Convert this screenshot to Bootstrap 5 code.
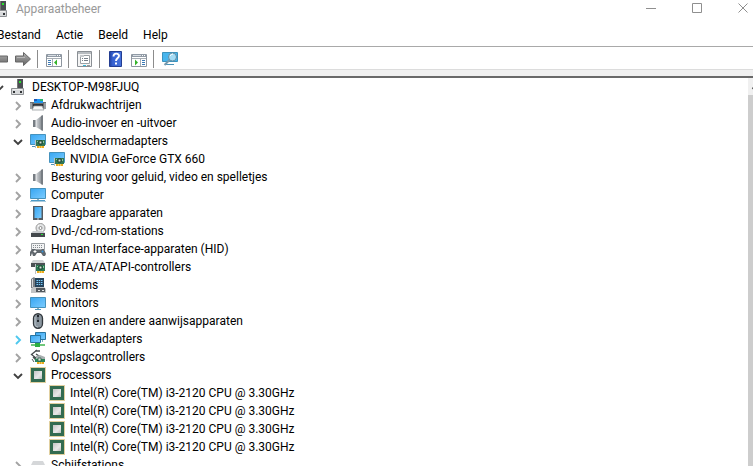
<!DOCTYPE html>
<html lang="nl">
<head>
<meta charset="utf-8">
<meta name="viewport" content="width=device-width, initial-scale=1">
<title>Apparaatbeheer</title>
<link href="https://cdn.jsdelivr.net/npm/bootstrap@5.3.0/dist/css/bootstrap.min.css" rel="stylesheet">
<style>
body{font-family:Roboto,"Noto Sans",sans-serif;font-size:12px;line-height:18px;color:#000;background:#fff}
.win{margin-left:-8px;margin-right:-13px}
.win button{border:0;background:none;padding:0;color:inherit;line-height:18px}
.win svg{display:block;flex:none}
.ic{width:16px;height:16px}
.titlebar{color:#999;height:18px}
.caption{gap:6px;padding-left:2px}
.winbtn{width:46px;height:16px;display:flex;align-items:center;justify-content:center}
.menubar{padding:8px 0 2px 5px;gap:15px}
.tools{border-top:1px solid #a9a9a9;height:24px;padding-top:2px;border-bottom:1px solid #dcdcdc}
.tools button+button{margin-left:7px}
.sep{width:1px;height:18px;background:#8c8c8c;margin:0 8px 0 6px}
.strip{height:8px;background:#f0f0f0;border-bottom:2px solid #696969}
.tree ul{padding-left:19px}
.item{height:18px;white-space:nowrap}
.win .tw{width:14px;height:18px;padding-top:2px;margin-right:5px;color:#a3a3a3;display:flex;align-items:center;justify-content:center}
.win .tw.open{color:#404040}
.win .tw.hot{color:#4fc8ee}
.leaf{padding-left:19px}
.item .ic{margin-right:5px}
.scroll{width:18px;background:#f0f0f0}
.thumb{background:#cdcdcd}
</style>
<script src="https://cdn.jsdelivr.net/npm/bootstrap@5.3.0/dist/js/bootstrap.bundle.min.js"></script>
</head>
<body class="overflow-hidden">
<svg class="position-absolute" width="0" height="0" aria-hidden="true" xmlns="http://www.w3.org/2000/svg">
<defs>
<linearGradient id="blue" x1="0" y1="0" x2="1" y2="1"><stop offset="0" stop-color="#37a6f2"/><stop offset="1" stop-color="#7cccff"/></linearGradient>
<linearGradient id="grey" x1="0" y1="0" x2="0" y2="1"><stop offset="0" stop-color="#b4b4b4"/><stop offset=".5" stop-color="#8a8a8a"/><stop offset="1" stop-color="#666"/></linearGradient>
<linearGradient id="cone" x1="0" y1="0" x2="1" y2="0"><stop offset="0" stop-color="#d5d8db"/><stop offset="1" stop-color="#82888e"/></linearGradient>
<linearGradient id="silver" x1="0" y1="0" x2="1" y2="1"><stop offset="0" stop-color="#c4c4c4"/><stop offset=".6" stop-color="#e8e8e8"/><stop offset="1" stop-color="#bdbdbd"/></linearGradient>
<linearGradient id="book" x1="0" y1="0" x2="1" y2="0"><stop offset="0" stop-color="#203f9e"/><stop offset=".25" stop-color="#3560cf"/><stop offset="1" stop-color="#4773dc"/></linearGradient>
</defs>
<symbol id="right" viewBox="0 0 8 10"><path d="M2 1l4 4-4 4" fill="none" stroke="currentColor" stroke-width="1.9"/></symbol>
<symbol id="down" viewBox="0 0 10 8"><path d="M1 2l4 4 4-4" fill="none" stroke="currentColor" stroke-width="1.9"/></symbol>
<symbol id="tower" viewBox="0 0 16 16"><path d="M6 0h6v10H6z" fill="#4b4f52"/><path d="M6 0h1v10H6z" fill="#777"/><path d="M8 2h2v2H8z" fill="#27e32c"/><path d="M.5 9.500h12v6H.5z" fill="#d8dadc" stroke="#8d9093"/><path d="M2 10h9v1H2z" fill="#eee"/><path d="M2 12h2v2H2zM9 12h2v2H9z" fill="#303336"/></symbol>
<symbol id="printer" viewBox="0 0 16 16"><path d="M4 2h9v5H4z" fill="#2196ef"/><path d="M4 2h3v2H4z" fill="#2056b8"/><path d="M10 2h3v2h-3z" fill="#29b46a"/><path d="M0 5h4v1h9V5h3v7H0z" fill="#6b7075"/><path d="M0 6h2v6H0zM14 6h2v6h-2z" fill="#9ba0a4"/><path d="M3 7h10v2H3z" fill="#303439"/><path d="M4 9h8l2 4H2z" fill="#f7f7f7" stroke="#8b9094" stroke-width=".7"/></symbol>
<symbol id="speaker" viewBox="0 0 16 16"><path d="M3 5h3v7H3z" fill="#777d83"/><path d="M6 5l6-4.500v15L6 12z" fill="url(#cone)"/><path d="M11 1l2-1v16l-2-1z" fill="#777d83"/><path d="M6 5v7" stroke="#eceeef"/></symbol>
<symbol id="display" viewBox="0 0 16 16"><path d="M.5 1.500h15v10H.5z" fill="url(#blue)" stroke="#4592bd"/><path d="M2 13h3v1H2z" fill="#5191b5"/><path d="M5.500 7v8" stroke="#bbc1c4"/><path d="M6 7h9v6H6z" fill="#327654"/><path d="M9 8h3v3H9z" fill="#d2ded4" stroke="#173f2d"/><path d="M7 8h1v1H7zM13 8h1v2h-1z" fill="#8bc59b"/><path d="M7 13h7v2H7z" fill="#eca91c"/><path d="M9.500 13v2M11.500 13v2" stroke="#fff1a3" stroke-width=".5"/></symbol>
<symbol id="computer" viewBox="0 0 16 16"><path d="M.5 1.500h15v10H.5z" fill="url(#blue)" stroke="#4592bd"/><path d="M7 12h2v1H7z" fill="#91aeba"/><path d="M1 13h14v1H1z" fill="#4c9bc8"/><path d="M0 14h16v1H0z" fill="#a8c9dc"/></symbol>
<symbol id="monitor" viewBox="0 0 16 16"><path d="M.5 2.500h15v10H.5z" fill="url(#blue)" stroke="#4592bd"/><path d="M7 13h2v1H7z" fill="#91aeba"/><path d="M5 14h6v1H5z" fill="#4f9ac0"/></symbol>
<symbol id="tablet" viewBox="0 0 16 16"><path d="M3 1h10v14H3z" fill="#535b62"/><path d="M4.500 2h7v11h-7z" fill="url(#blue)"/><path d="M7 13.500h2v1H7z" fill="#c9d4da"/></symbol>
<symbol id="disc" viewBox="0 0 16 16"><circle cx="10.500" cy="5" r="4.500" fill="#e2e4e5" stroke="#999"/><path d="M8 2l5 6" stroke="#fff"/><circle cx="10.500" cy="5" r="1.500" fill="#fff" stroke="#888"/><path d="M3 8h10l2 2H1z" fill="#c9cccf"/><path d="M1 10h14v4H1z" fill="#44494d"/><path d="M11 11h2v1h-2z" fill="#28df34"/></symbol>
<symbol id="hid" viewBox="0 0 16 16"><path d="M1.500 2.500h13v6h-13z" fill="#f2f3f4" stroke="#9ca1a5"/><path d="M3 4.500h10M3 6.500h10" stroke="#858b90" stroke-dasharray="1 1"/><path d="M2 8h3l1 1h5l1-1h2l2 5-1 2h-2l-2-3H7l-2 3H3L2 12l-1 3H0v-4z" fill="#60676d"/><path d="M5 9v3M3.500 10.500h3" stroke="#fff"/><circle cx="12.500" cy="10.500" r="1" fill="#3295db"/></symbol>
<symbol id="ide" viewBox="0 0 16 16"><path d="M3 1h10l2 3H1z" fill="#d0d3d5"/><path d="M1 4h14v4H1z" fill="#4c5155"/><path d="M5.500 5v10" stroke="#bbc1c4"/><path d="M6 6h9v6H6z" fill="#2c7753"/><path d="M9 7h3v3H9z" fill="#dce5dd" stroke="#173f2d"/><path d="M7 7h1v1H7zM13 7h1v2h-1z" fill="#8bc59b"/><path d="M7 12h7v2H7z" fill="#eca91c"/><path d="M9.500 12v2M11.500 12v2" stroke="#fff1a3" stroke-width=".5"/></symbol>
<symbol id="modem" viewBox="0 0 16 16"><path d="M1 2l3-2 2 2v9H1z" fill="#797f84"/><path d="M2 2h1v8H2z" fill="#d6d8da"/><path d="M5 1h9v9H5z" fill="#24425a"/><path d="M6.500 3.500h6M6.500 5.500h6M6.500 7.500h6" stroke="#78c9fa" stroke-dasharray="1.500 .75"/><path d="M3 10h11l2 2v4H1v-4z" fill="#c1c4c6"/><path d="M6 11h9v4H6z" fill="#52595e"/><path d="M8 13h2v1H8zM12 13h2v1h-2z" fill="#e3e5e6"/></symbol>
<symbol id="mouse" viewBox="0 0 16 16"><rect x="3.500" y=".75" width="9" height="14.500" rx="4.500" fill="#8b969f" stroke="#31373c" stroke-width="1.300"/><path d="M5 4v7c0 2 2 3 3 3" fill="none" stroke="#b9c4cc"/><path d="M7 2h2v7H7z" fill="#22282e"/><path d="M7.500 4h1v3h-1z" fill="#b9c9d7"/></symbol>
<symbol id="net" viewBox="0 0 16 16"><path d="M5.500 1.500h10v7h-10z" fill="url(#blue)" stroke="#2876a3"/><path d="M.5 4.500h10v7H.5z" fill="url(#blue)" stroke="#2876a3"/><path d="M1 13h14v2H1z" fill="#70c77b"/><path d="M5 12h5v4H5z" fill="#2dae42"/><path d="M12 9h1v2h-1z" fill="#7eaabf"/></symbol>
<symbol id="storage" viewBox="0 0 16 16"><path d="M7 1L1.500 5.500 6 9l3-2-3-2M5 2h5M3 8l3 3" fill="none" stroke="#484c4f" stroke-width="1.300"/><path d="M5 9h10v4H5z" fill="#2c8457"/><path d="M6 7l4-1 5 2v2H6z" fill="#a8afb0"/><path d="M8 9h3v3H8z" fill="#d8e1da" stroke="#225640" stroke-width=".7"/><path d="M7 13h7v2H7z" fill="#eca91c"/><path d="M9.500 13v2M11.500 13v2" stroke="#fff1a3" stroke-width=".5"/><path d="M2 10l2 3" stroke="#55595c"/></symbol>
<symbol id="cpu" viewBox="0 0 16 16"><path d="M.5 .5h15v15H.5z" fill="none" stroke="#c2a040" stroke-dasharray="1 1"/><path d="M1 1h14v14H1z" fill="#326b50"/><path d="M4 4h8v8H4z" fill="url(#silver)"/></symbol>
<symbol id="drive" viewBox="0 0 16 16"><path d="M3 4h10l2 4H1z" fill="#d5d7d9"/><path d="M1 9h14v4H1z" fill="#484d51"/><path d="M12 10h1v1h-1z" fill="#28df34"/></symbol>
<symbol id="back" viewBox="0 0 16 16"><path d="M.5 8l7-6.500V5h8v6h-8v3.500z" fill="url(#grey)" stroke="#666"/></symbol>
<symbol id="forward" viewBox="0 0 16 16"><path d="M15.500 8l-7-6.500V5h-8v6h8v3.500z" fill="url(#grey)" stroke="#666"/><path d="M2 6.500h8" stroke="#b7b7b7"/></symbol>
<symbol id="pane" viewBox="0 0 16 16"><path d="M.5 3.500h15v12H.5z" fill="#fff" stroke="#8e969f"/><path d="M1 3h14v3H1z" fill="#919ba6"/><path d="M2 4h8v1H2z" fill="#d8dde3"/><path d="M11 4h1v1h-1zM13 4h1v1h-1z" fill="#fff"/><path d="M1 7.500h14M6.500 8v7" stroke="#a6adb4"/><path d="M2 9.500h3M2 11.500h3M2 13.500h3" stroke="#3978b5"/><path d="M11 8.500v6l-3-3z" fill="#34b228"/></symbol>
<symbol id="props" viewBox="0 0 16 16"><path d="M.5 .5h14v15H.5z" fill="#f5f5f5" stroke="#8a8f94"/><path d="M1 1h13v2H1z" fill="#b7bcc0"/><path d="M3.500 4.500h9v8h-9z" fill="#fff" stroke="#9ca1a5"/><path d="M3 4h4v2H3z" fill="#c5c9cc"/><path d="M5 7.500h1M7 7.500h4M5 9.500h1M7 9.500h4" stroke="#747f88"/><path d="M6 14h3v1H6z" fill="#36b5d6"/><path d="M10 14h3v1h-3z" fill="#999"/></symbol>
<symbol id="help" viewBox="0 0 16 16"><path d="M1.500 .5h12v15h-12z" fill="url(#book)" stroke="#233d91"/><path d="M5.500 5.500c0-4 5.500-3.500 5.500-.7C11 7 8 7 8 10" fill="none" stroke="#fff" stroke-width="1.900"/><path d="M7 11.500h2v2H7z" fill="#fff"/></symbol>
<symbol id="action" viewBox="0 0 16 16"><path d="M.5 3.500h15v12H.5z" fill="#fff" stroke="#8e969f"/><path d="M1 3h14v3H1z" fill="#919ba6"/><path d="M2 4h8v1H2z" fill="#d8dde3"/><path d="M11 4h1v1h-1zM13 4h1v1h-1z" fill="#fff"/><path d="M1 7.500h14M9.500 8v7" stroke="#a6adb4"/><path d="M11 9.500h3M11 11.500h3M11 13.500h3" stroke="#3978b5"/><path d="M4 8.500v6l3-3z" fill="#34b228"/></symbol>
<symbol id="scan" viewBox="0 0 16 16"><path d="M.5 1.500h15v9H.5z" fill="#47b5ed" stroke="#3b92bd"/><path d="M3 13h9v1H3z" fill="#4992b9"/><path d="M7.500 9l-5 5" stroke="#7899ac" stroke-width="2"/><circle cx="10.500" cy="6" r="4" fill="#a5dcf5" stroke="#638da3"/><path d="M8 5q1-2 3-2" fill="none" stroke="#fff"/></symbol>
</svg>

<main class="win d-flex flex-column vh-100">
  <header class="titlebar d-flex justify-content-between flex-shrink-0">
    <div class="caption d-flex align-items-center"><svg class="ic"><use href="#tower"/></svg><span>Apparaatbeheer</span></div>
    <div class="d-flex">
      <button class="winbtn" aria-label="Minimaliseren"><svg width="11" height="11"><path d="M0 5.500h10" stroke="#8f8f8f"/></svg></button>
      <button class="winbtn" aria-label="Maximaliseren"><svg width="11" height="11"><path d="M.5 .5h9v9h-9z" fill="none" stroke="#8f8f8f"/></svg></button>
      <button class="winbtn" aria-label="Sluiten"><svg width="11" height="11"><path d="M.5 .5l9 9M9.500 .5l-9 9" stroke="#8f8f8f"/></svg></button>
    </div>
  </header>
  <nav class="menubar d-flex flex-shrink-0" aria-label="Menu">
    <button>Bestand</button><button>Actie</button><button>Beeld</button><button>Help</button>
  </nav>
  <div class="tools d-flex align-items-center flex-shrink-0" role="toolbar" aria-label="Werkbalk">
    <button aria-label="Vorige"><svg class="ic"><use href="#back"/></svg></button>
    <button aria-label="Volgende"><svg class="ic"><use href="#forward"/></svg></button>
    <span class="sep"></span>
    <button aria-label="Consolestructuur"><svg class="ic"><use href="#pane"/></svg></button>
    <span class="sep"></span>
    <button aria-label="Eigenschappen"><svg class="ic"><use href="#props"/></svg></button>
    <span class="sep"></span>
    <button aria-label="Help-onderwerpen"><svg class="ic"><use href="#help"/></svg></button>
    <button aria-label="Actievenster"><svg class="ic"><use href="#action"/></svg></button>
    <span class="sep"></span>
    <button aria-label="Zoeken naar gewijzigde apparaten"><svg class="ic"><use href="#scan"/></svg></button>
  </div>
  <div class="strip flex-shrink-0"></div>
  <div class="d-flex flex-grow-1 overflow-hidden">
    <div class="tree flex-grow-1">
      <div class="item d-flex align-items-center"><button class="tw open" aria-label="Samenvouwen"><svg width="10" height="8"><use href="#down"/></svg></button><svg class="ic"><use href="#tower"/></svg><span>DESKTOP-M98FJUQ</span></div>
      <ul class="list-unstyled mb-0">
        <li class="item d-flex align-items-center"><button class="tw" aria-label="Uitvouwen"><svg width="8" height="10"><use href="#right"/></svg></button><svg class="ic"><use href="#printer"/></svg><span>Afdrukwachtrijen</span></li>
        <li class="item d-flex align-items-center"><button class="tw" aria-label="Uitvouwen"><svg width="8" height="10"><use href="#right"/></svg></button><svg class="ic"><use href="#speaker"/></svg><span>Audio-invoer en -uitvoer</span></li>
        <li>
          <div class="item d-flex align-items-center"><button class="tw open" aria-label="Samenvouwen"><svg width="10" height="8"><use href="#down"/></svg></button><svg class="ic"><use href="#display"/></svg><span>Beeldschermadapters</span></div>
          <ul class="list-unstyled mb-0">
            <li class="item leaf d-flex align-items-center"><svg class="ic"><use href="#display"/></svg><span>NVIDIA GeForce GTX 660</span></li>
          </ul>
        </li>
        <li class="item d-flex align-items-center"><button class="tw" aria-label="Uitvouwen"><svg width="8" height="10"><use href="#right"/></svg></button><svg class="ic"><use href="#speaker"/></svg><span>Besturing voor geluid, video en spelletjes</span></li>
        <li class="item d-flex align-items-center"><button class="tw" aria-label="Uitvouwen"><svg width="8" height="10"><use href="#right"/></svg></button><svg class="ic"><use href="#computer"/></svg><span>Computer</span></li>
        <li class="item d-flex align-items-center"><button class="tw" aria-label="Uitvouwen"><svg width="8" height="10"><use href="#right"/></svg></button><svg class="ic"><use href="#tablet"/></svg><span>Draagbare apparaten</span></li>
        <li class="item d-flex align-items-center"><button class="tw" aria-label="Uitvouwen"><svg width="8" height="10"><use href="#right"/></svg></button><svg class="ic"><use href="#disc"/></svg><span>Dvd-/cd-rom-stations</span></li>
        <li class="item d-flex align-items-center"><button class="tw" aria-label="Uitvouwen"><svg width="8" height="10"><use href="#right"/></svg></button><svg class="ic"><use href="#hid"/></svg><span>Human Interface-apparaten (HID)</span></li>
        <li class="item d-flex align-items-center"><button class="tw" aria-label="Uitvouwen"><svg width="8" height="10"><use href="#right"/></svg></button><svg class="ic"><use href="#ide"/></svg><span>IDE ATA/ATAPI-controllers</span></li>
        <li class="item d-flex align-items-center"><button class="tw" aria-label="Uitvouwen"><svg width="8" height="10"><use href="#right"/></svg></button><svg class="ic"><use href="#modem"/></svg><span>Modems</span></li>
        <li class="item d-flex align-items-center"><button class="tw" aria-label="Uitvouwen"><svg width="8" height="10"><use href="#right"/></svg></button><svg class="ic"><use href="#monitor"/></svg><span>Monitors</span></li>
        <li class="item d-flex align-items-center"><button class="tw" aria-label="Uitvouwen"><svg width="8" height="10"><use href="#right"/></svg></button><svg class="ic"><use href="#mouse"/></svg><span>Muizen en andere aanwijsapparaten</span></li>
        <li class="item d-flex align-items-center"><button class="tw hot" aria-label="Uitvouwen"><svg width="8" height="10"><use href="#right"/></svg></button><svg class="ic"><use href="#net"/></svg><span>Netwerkadapters</span></li>
        <li class="item d-flex align-items-center"><button class="tw" aria-label="Uitvouwen"><svg width="8" height="10"><use href="#right"/></svg></button><svg class="ic"><use href="#storage"/></svg><span>Opslagcontrollers</span></li>
        <li>
          <div class="item d-flex align-items-center"><button class="tw open" aria-label="Samenvouwen"><svg width="10" height="8"><use href="#down"/></svg></button><svg class="ic"><use href="#cpu"/></svg><span>Processors</span></div>
          <ul class="list-unstyled mb-0">
            <li class="item leaf d-flex align-items-center"><svg class="ic"><use href="#cpu"/></svg><span>Intel(R) Core(TM) i3-2120 CPU @ 3.30GHz</span></li>
            <li class="item leaf d-flex align-items-center"><svg class="ic"><use href="#cpu"/></svg><span>Intel(R) Core(TM) i3-2120 CPU @ 3.30GHz</span></li>
            <li class="item leaf d-flex align-items-center"><svg class="ic"><use href="#cpu"/></svg><span>Intel(R) Core(TM) i3-2120 CPU @ 3.30GHz</span></li>
            <li class="item leaf d-flex align-items-center"><svg class="ic"><use href="#cpu"/></svg><span>Intel(R) Core(TM) i3-2120 CPU @ 3.30GHz</span></li>
          </ul>
        </li>
        <li class="item d-flex align-items-center"><button class="tw" aria-label="Uitvouwen"><svg width="8" height="10"><use href="#right"/></svg></button><svg class="ic"><use href="#drive"/></svg><span>Schijfstations</span></li>
      </ul>
    </div>
    <div class="scroll d-flex flex-column flex-shrink-0">
      <button class="w-100" aria-label="Omhoog schuiven"><svg width="18" height="17"><path d="M4.500 11L9 6.500l4.500 4.500" fill="none" stroke="#505050" stroke-width="2"/></svg></button>
      <div class="thumb flex-grow-1"></div>
    </div>
  </div>
</main>
</body>
</html>
